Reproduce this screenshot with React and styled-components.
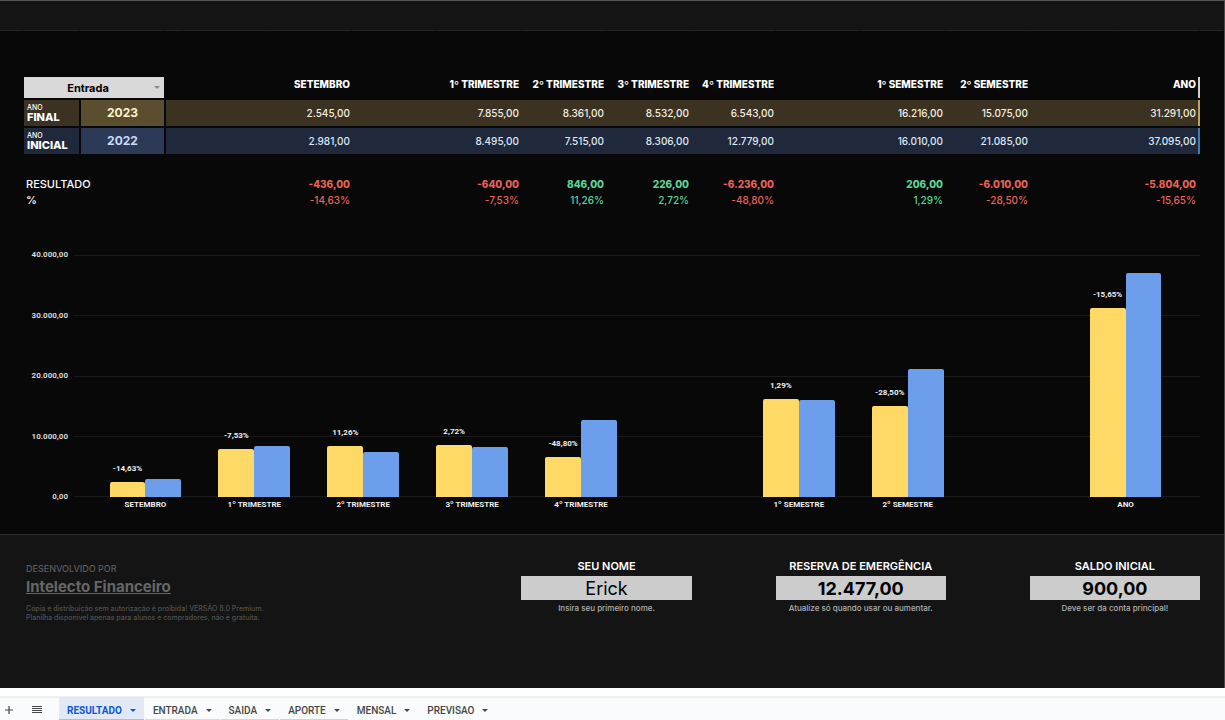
import React, { useState } from "react";
import styled, { createGlobalStyle } from "styled-components";

const GlobalStyle = createGlobalStyle`
  * {
    box-sizing: border-box;
  }
  body {
    margin: 0;
    background: #080808;
    color: #ffffff;
    font-family: Inter, "Open Sans", sans-serif;
  }
  button,
  input,
  select {
    font-family: inherit;
  }
`;

const Page = styled.div`
  display: flex;
  flex-direction: column;
  min-height: 100vh;
`;

const Sheet = styled.div`
  flex: 1;
  display: flex;
  flex-direction: column;
  border-top: 1px solid #555555;
  border-right: 1px solid #4a4a4a;
`;

const TopBand = styled.header`
  display: grid;
  grid-template-columns: 23fr 57fr 84fr 19fr repeat(12, 85fr) 24fr;
  height: 30px;
  background: #141414;
`;

const BandCell = styled.div`
  margin-right: 1px;
  border-bottom: 1px solid #262626;
`;

const Summary = styled.section`
  padding: 44px 24px 0;
`;

const SummaryTable = styled.table`
  width: 100%;
  table-layout: fixed;
  border-collapse: separate;
  border-spacing: 0 2px;
  font-size: 10px;
  line-height: 14px;

  th,
  td {
    padding: 0 2px;
    text-align: right;
    white-space: nowrap;
  }
`;

const HeadRow = styled.tr`
  height: 21px;

  th {
    font-weight: 800;
    vertical-align: top;
  }
  && th:first-child {
    padding: 0 2px 0 0;
  }
  th:last-child {
    border-right: 2px solid #d0d0d0;
  }
`;

const YearRow = styled.tr`
  height: 26px;
  color: ${(props) => props.$theme.text};
  font-weight: 500;

  th,
  td {
    background: ${(props) => props.$theme.row};
  }
  td:last-child {
    border-right: 2px solid ${(props) => props.$theme.edge};
  }
  && th {
    padding-left: 3px;
    border-right: 2px solid #080808;
    text-align: left;
  }
  && td:nth-child(2) {
    border-right: 2px solid #080808;
    background: ${(props) => props.$theme.year};
    color: ${(props) => props.$theme.yearText};
    font-size: 12px;
    font-weight: 700;
    text-align: center;
  }
`;

const RowCaption = styled.span`
  display: block;
  color: #ffffff;
  font-size: ${(props) => (props.$small ? "7px" : "11px")};
  font-weight: ${(props) => (props.$small ? 500 : 800)};
  line-height: ${(props) => (props.$small ? "8px" : "11px")};
`;

const ResultRow = styled.tr`
  && th {
    color: #ffffff;
    font-size: 11px;
    font-weight: 500;
    text-align: left;
  }
  && th,
  && td {
    padding-top: ${(props) => (props.$first ? "21px" : "0")};
  }
  td {
    font-weight: ${(props) => (props.$first ? 800 : 500)};
  }
  td:last-child {
    padding-right: 4px;
  }
`;

const Delta = styled.td`
  color: ${(props) => (props.$negative ? "#ea6158" : "#5bd69a")};
`;

const SelectBox = styled.span`
  display: grid;
  align-items: center;
  height: 21px;
  background: #d9d9d9;
  color: #8a8a8a;

  > * {
    grid-area: 1 / 1;
  }
  svg {
    justify-self: end;
    margin-right: 4px;
    pointer-events: none;
  }
`;

const TypeSelect = styled.select`
  width: 100%;
  height: 100%;
  padding: 0 12px 0 0;
  border: 0;
  appearance: none;
  background: transparent;
  color: #000000;
  font-size: 11px;
  font-weight: 700;
  text-align: center;
  text-align-last: center;
`;

const Chart = styled.section`
  display: flex;
  gap: 5px;
  padding: 41px 24px 24px;
  font-family: Roboto, sans-serif;
  font-size: 8px;
  font-weight: 700;
  line-height: 10px;
`;

const Axis = styled.div`
  display: flex;
  flex-direction: column;
  justify-content: space-between;
  width: 44px;
  height: 252px;
  color: #d8d8d8;
  text-align: right;
`;

const Plot = styled.div`
  flex: 1;
  display: grid;
  padding-top: 5px;

  > * {
    grid-area: 1 / 1;
  }
`;

const GridLines = styled.div`
  display: flex;
  flex-direction: column;
  justify-content: space-between;
  height: 242px;
`;

const GridLine = styled.div`
  height: 1px;
  background: #1a1a1a;
`;

const Groups = styled.div`
  display: grid;
  grid-template-columns: repeat(10, minmax(0, 1fr));
  padding: 0 20px 0 18px;
`;

const Group = styled.div`
  display: flex;
  flex-direction: column;
  align-items: center;
  color: #efefef;
`;

const Bars = styled.div`
  display: flex;
  justify-content: center;
  align-items: flex-end;
  width: 100%;
  height: 242px;
`;

const BarColumn = styled.div`
  width: 33%;
  height: 100%;
  display: flex;
  flex-direction: column;
  justify-content: flex-end;
  text-align: center;
`;

const Bar = styled.div`
  margin-top: 8px;
  border-radius: 2px 2px 0 0;
  background: ${(props) => props.$color};
`;

const GroupName = styled.div`
  margin-top: 3px;
`;

const Footer = styled.footer`
  flex: 1;
  display: grid;
  grid-template-columns: minmax(0, 413fr) repeat(3, minmax(0, 170fr));
  column-gap: 84px;
  align-items: start;
  padding: 24px 24px 0;
  border-top: 1px solid #2c2c2c;
  background: #141414;
`;

const Credits = styled.div`
  padding: 4px 2px 0;
  color: #5c5c5c;
  font-size: 9px;
  font-weight: 500;
  line-height: 12px;

  p {
    margin: 0;
  }
  a {
    display: inline-block;
    margin: 3px 0 8px;
    color: #666666;
    font-size: 15px;
    font-weight: 700;
    line-height: 18px;
  }
`;

const Legal = styled.p`
  color: #505050;
  font-size: 7px;
  line-height: 9px;
`;

const Field = styled.div`
  display: flex;
  flex-direction: column;
  text-align: center;

  label {
    margin-bottom: 3px;
    font-size: 11px;
    font-weight: 600;
    line-height: 14px;
    white-space: nowrap;
  }
  input {
    width: 100%;
    height: 24px;
    padding: 0;
    border: 0;
    background: #cccccc;
    color: #000000;
    font-size: 18px;
    font-weight: ${(props) => (props.$strong ? 700 : 400)};
    text-align: center;
  }
  small {
    margin-top: 2px;
    color: #b0b0b0;
    font-size: 8px;
    font-weight: 500;
    line-height: 12px;
    white-space: nowrap;
  }
`;

const TabBar = styled.nav`
  display: flex;
  align-items: stretch;
  height: 32px;
  border-top: 8px solid #ffffff;
  background: #f9fbfd;
  color: #444746;
  box-shadow: inset 0 2px #eef1f0;
`;

const IconButton = styled.button`
  display: flex;
  align-items: center;
  justify-content: center;
  width: ${(props) => props.$width};
  padding: 4px 0 0;
  border: 0;
  background: none;
  color: inherit;
`;

const Tab = styled.button`
  display: flex;
  align-items: center;
  gap: 8px;
  margin: 1px 1px 0 0;
  padding: 4px 8px 0;
  border: 0;
  border-bottom: 1px solid ${(props) => props.$line};
  background: ${(props) => (props.$active ? "#e1e9f7" : "transparent")};
  color: ${(props) => (props.$active ? "#0b57d0" : "#444746")};
  font-family: Roboto, sans-serif;
  font-size: 10px;
  font-weight: ${(props) => (props.$active ? 700 : 500)};
`;

const Tabs = styled.div`
  display: flex;
  margin-left: 3px;
`;

const gold = {
  row: "#3b3222",
  year: "#5b4e2f",
  edge: "#bda35c",
  text: "#f5efe0",
  yearText: "#fff2cc",
};

const blue = {
  row: "#1f293b",
  year: "#2c3a58",
  edge: "#3d7dbb",
  text: "#dfe8f7",
  yearText: "#c9daf8",
};

const periods = [
  { name: "SETEMBRO", current: 2545, previous: 2981 },
  { name: "1º TRIMESTRE", current: 7855, previous: 8495 },
  { name: "2º TRIMESTRE", current: 8361, previous: 7515 },
  { name: "3º TRIMESTRE", current: 8532, previous: 8306 },
  { name: "4º TRIMESTRE", current: 6543, previous: 12779 },
  { name: "1º SEMESTRE", current: 16216, previous: 16010 },
  { name: "2º SEMESTRE", current: 15075, previous: 21085 },
  { name: "ANO", current: 31291, previous: 37095 },
];

// null leaves an empty slot between the groups
const chartSlots = [
  ...periods.slice(0, 5),
  null,
  ...periods.slice(5, 7),
  null,
  periods[7],
];

const columns = [57, 85, 186, 169, 85, 85, 85, 169, 85, 170];
const axisMax = 40000;
const ticks = [40000, 30000, 20000, 10000, 0];

const tabs = [
  { name: "RESULTADO", line: "#b3bccd" },
  { name: "ENTRADA", line: "#c9e3d8" },
  { name: "SAIDA", line: "#efcbca" },
  { name: "APORTE", line: "#c6d3ea" },
  { name: "MENSAL", line: "#f9fbfd" },
  { name: "PREVISAO", line: "#f9fbfd" },
];

const money = (num) => {
  const [whole, cents] = num.toFixed(2).split(".");
  return `${whole.replace(/\B(?=(\d{3})+$)/g, ".")},${cents}`;
};

const percent = ({ current, previous }) =>
  `${((current / previous - 1) * 100).toFixed(2).replace(".", ",")}%`;

function Arrow({ size = 6 }) {
  return (
    <svg width={size} height={size / 2} viewBox="0 0 6 3" aria-hidden="true">
      <path d="M0 0h6L3 3z" fill="currentColor" />
    </svg>
  );
}

function YearLine({ caption, year, field, theme }) {
  return (
    <YearRow $theme={theme}>
      <th scope="row">
        <RowCaption $small>ANO</RowCaption>
        <RowCaption>{caption}</RowCaption>
      </th>
      <td>{year}</td>
      {periods.map((period) => (
        <td key={period.name}>{money(period[field])}</td>
      ))}
    </YearRow>
  );
}

function ResultLine({ label, first, format }) {
  return (
    <ResultRow $first={first}>
      <th scope="row" colSpan={2}>
        {label}
      </th>
      {periods.map((period) => (
        <Delta key={period.name} $negative={period.current < period.previous}>
          {format(period)}
        </Delta>
      ))}
    </ResultRow>
  );
}

function ChartGroup({ period }) {
  const height = (value) => ({ height: `${(value / axisMax) * 242}px` });

  return (
    <Group>
      <Bars>
        <BarColumn>
          {percent(period)}
          <Bar $color="#fed966" style={height(period.current)} />
        </BarColumn>
        <BarColumn>
          <Bar $color="#6d9eeb" style={height(period.previous)} />
        </BarColumn>
      </Bars>
      <GroupName>{period.name}</GroupName>
    </Group>
  );
}

function InputField({ id, label, value, hint, strong }) {
  return (
    <Field $strong={strong}>
      <label htmlFor={id}>{label}</label>
      <input id={id} defaultValue={value} />
      <small>{hint}</small>
    </Field>
  );
}

export default function App() {
  const [type, setType] = useState("Entrada");
  const [active, setActive] = useState("RESULTADO");

  return (
    <Page>
      <GlobalStyle />
      <Sheet>
        <TopBand>
          {Array.from({ length: 17 }, (_, i) => (
            <BandCell key={i} />
          ))}
        </TopBand>

        <Summary>
          <SummaryTable>
            <colgroup>
              {columns.map((width, i) => (
                <col key={i} style={{ width: `${(width / 1176) * 100}%` }} />
              ))}
            </colgroup>
            <thead>
              <HeadRow>
                <th colSpan={2}>
                  <SelectBox>
                    <TypeSelect
                      aria-label="Tipo"
                      value={type}
                      onChange={(e) => setType(e.target.value)}
                    >
                      <option>Entrada</option>
                      <option>Saida</option>
                      <option>Aporte</option>
                    </TypeSelect>
                    <Arrow />
                  </SelectBox>
                </th>
                {periods.map((period) => (
                  <th key={period.name} scope="col">
                    {period.name}
                  </th>
                ))}
              </HeadRow>
            </thead>
            <tbody>
              <YearLine
                caption="FINAL"
                year="2023"
                field="current"
                theme={gold}
              />
              <YearLine
                caption="INICIAL"
                year="2022"
                field="previous"
                theme={blue}
              />
              <ResultLine
                label="RESULTADO"
                first
                format={(p) => money(p.current - p.previous)}
              />
              <ResultLine label="%" format={percent} />
            </tbody>
          </SummaryTable>
        </Summary>

        <Chart>
          <Axis>
            {ticks.map((tick) => (
              <span key={tick}>{money(tick)}</span>
            ))}
          </Axis>
          <Plot>
            <GridLines>
              {ticks.map((tick) => (
                <GridLine key={tick} />
              ))}
            </GridLines>
            <Groups>
              {chartSlots.map((period, i) =>
                period ? (
                  <ChartGroup key={period.name} period={period} />
                ) : (
                  <Group key={i} />
                )
              )}
            </Groups>
          </Plot>
        </Chart>

        <Footer>
          <Credits>
            <p>DESENVOLVIDO POR</p>
            <a href="#intelecto">Intelecto Financeiro</a>
            <Legal>
              Cópia e distribuição sem autorização é proibida! VERSÃO 8.0
              Premium.
              <br />
              Planilha disponível apenas para alunos e compradores, não é
              gratuita.
            </Legal>
          </Credits>
          <InputField
            id="nome"
            label="SEU NOME"
            value="Erick"
            hint="Insira seu primeiro nome."
          />
          <InputField
            id="reserva"
            label="RESERVA DE EMERGÊNCIA"
            value="12.477,00"
            hint="Atualize só quando usar ou aumentar."
            strong
          />
          <InputField
            id="saldo"
            label="SALDO INICIAL"
            value="900,00"
            hint="Deve ser da conta principal!"
            strong
          />
        </Footer>
      </Sheet>

      <TabBar>
        <IconButton $width="18px" aria-label="Adicionar página">
          <svg width="8" height="8" viewBox="0 0 8 8">
            <path d="M4 0v8M0 4h8" stroke="currentColor" strokeWidth="1.2" />
          </svg>
        </IconButton>
        <IconButton $width="38px" aria-label="Todas as páginas">
          <svg
            width="10"
            height="8"
            viewBox="0 0 10 8"
            shapeRendering="crispEdges"
          >
            <path
              d="M0 0h10v1H0zM0 2h10v1H0zM0 4h10v1H0zM0 6h10v1H0z"
              fill="currentColor"
            />
          </svg>
        </IconButton>
        <Tabs>
          {tabs.map((tab) => (
            <Tab
              key={tab.name}
              $line={tab.line}
              $active={tab.name === active}
              onClick={() => setActive(tab.name)}
            >
              {tab.name}
              <Arrow />
            </Tab>
          ))}
        </Tabs>
      </TabBar>
    </Page>
  );
}
